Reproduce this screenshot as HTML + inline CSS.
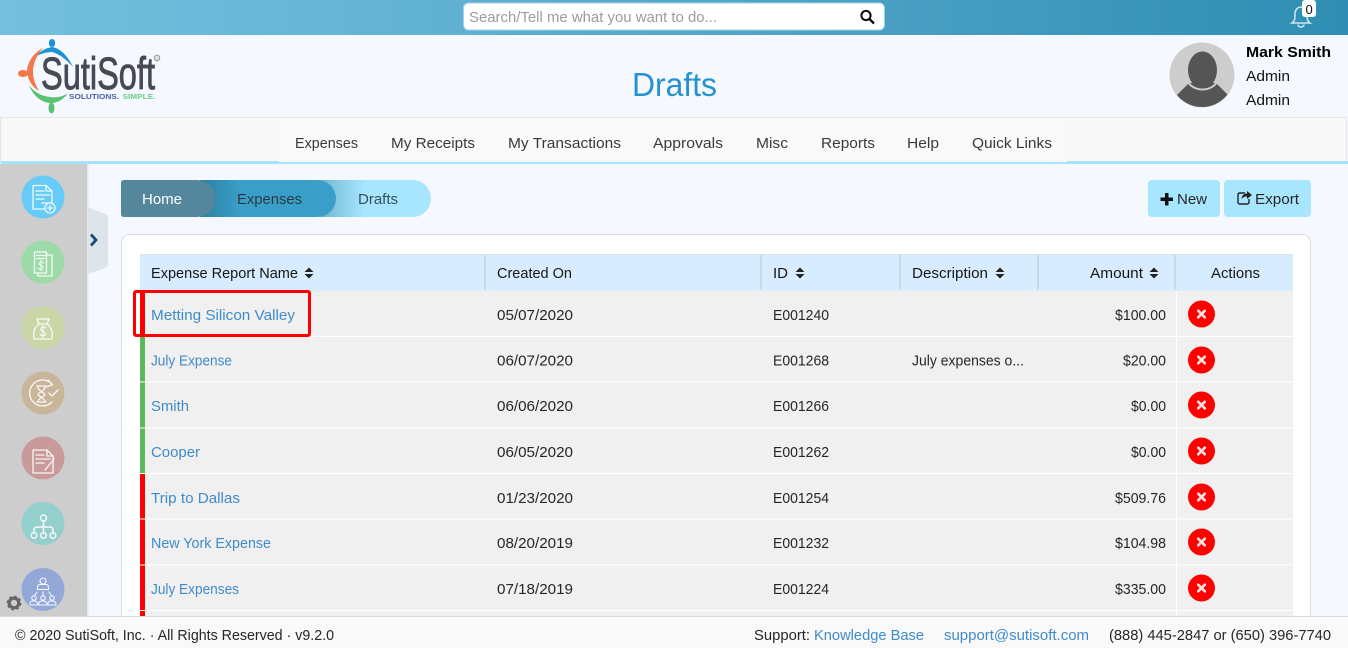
<!DOCTYPE html>
<html lang="en"><head><meta charset="utf-8"><title>Drafts</title>
<style>
html,body{margin:0;padding:0;width:1348px;height:648px;overflow:hidden;background:#f5f9ff}
svg{display:block}
text{font-family:"Liberation Sans",sans-serif;font-size:15px;fill:#262626}
.nav{fill:#3a3a3a}.lnk{fill:#3f8bcb}.hd{fill:#161616}
.i{fill:none;stroke:#fff;stroke-width:1.3;stroke-linejoin:round;stroke-linecap:round;opacity:.9}
</style></head><body>
<svg xmlns="http://www.w3.org/2000/svg" width="1348" height="648" viewBox="0 0 1348 648">
<defs>
<linearGradient id="top" x1="0" x2="1" y1="0" y2="0"><stop offset="0" stop-color="#74c0de"/><stop offset=".25" stop-color="#66b5d6"/><stop offset="1" stop-color="#2f8db3"/></linearGradient>
<linearGradient id="s1" x1="0" x2="1" y1="0" y2="0"><stop offset="0" stop-color="#2a7fa3"/><stop offset="1" stop-color="#3a9fc8"/></linearGradient>
<linearGradient id="s2" x1="0" x2="1" y1="0" y2="0"><stop offset="0" stop-color="#6fb6d3"/><stop offset="1" stop-color="#a8e6ff"/></linearGradient>
<clipPath id="av"><circle cx="1202" cy="75" r="32"/></clipPath>
<symbol id="del" overflow="visible"><circle cx="0" cy="0" r="13.5" fill="#fe0000"/><path d="M-3.3-3.3L3.3 3.3M3.3-3.3L-3.3 3.3" stroke="#fbe4e4" stroke-width="2.6" stroke-linecap="round"/></symbol>
<symbol id="sort" overflow="visible"><path d="M0-5.5L4.5-1H-4.5ZM0 5.5L4.5 1H-4.5Z" fill="#222"/></symbol>
</defs>

<!-- top bar -->
<rect width="1348" height="35" fill="url(#top)"/>
<rect x="463.5" y="3" width="421" height="27" rx="5" fill="#fff" stroke="#a5d3ea"/>
<text x="469" y="22" style="fill:#9c9c9c" textLength="248" lengthAdjust="spacingAndGlyphs">Search/Tell me what you want to do...</text>
<circle cx="866" cy="15.5" r="4.6" fill="none" stroke="#111" stroke-width="2"/><path d="M869.5 19L874 23.5" stroke="#111" stroke-width="2.4"/>
<path d="M1292 23c3-2 3-5 3-9 0-4 2.5-7 6-7s6 3 6 7c0 4 0 7 3 9z" fill="none" stroke="#cfeaf5" stroke-width="1.5"/><path d="M1298 24.500a3 2.500 0 0 0 6 0" fill="none" stroke="#cfeaf5" stroke-width="1.5"/>
<rect x="1302" y="0" width="14" height="17" rx="3" fill="#fff"/>
<text x="1305.5" y="14" style="font-size:13px;fill:#111">0</text>

<!-- logo -->
<g>
<path d="M35 57C40 51 46 48 52 47C60 48 68 56 73 67C66 59 59 54 52 52C46 52 40 54 35 57Z" fill="#1e93d2"/>
<rect x="49" y="39" width="6" height="8" rx="3" fill="#1e93d2"/>
<path d="M43 48C33 53 27 63 27 72C28 80 32 87 39 91C35 84 33 78 33 72C33 63 37 55 43 48Z" fill="#f4784a"/>
<ellipse cx="23" cy="73.500" rx="5" ry="3.500" fill="#f4784a"/>
<path d="M29 85C33 96 42 103 51 103C58 103 64 99 68 93C62 97 56 98 50 97C41 96 34 92 29 85Z" fill="#5cbf72"/>
<ellipse cx="51.500" cy="108" rx="3" ry="5.500" fill="#5cbf72"/>
<text x="41" y="89" style="font-size:45px;fill:#464a55;stroke:#464a55;stroke-width:.9" textLength="114" lengthAdjust="spacingAndGlyphs">SutiSoft</text>
<text x="69" y="99" style="font-size:7.5px;fill:#4d5cab;font-weight:bold" textLength="50" lengthAdjust="spacingAndGlyphs">SOLUTIONS.</text>
<text x="122.5" y="99" style="font-size:7.5px;fill:#6fc98a;font-weight:bold" textLength="33" lengthAdjust="spacingAndGlyphs">SIMPLE.</text>
<circle cx="157" cy="58" r="2.8" fill="#ddd" stroke="#888" stroke-width=".8"/>
</g>

<text x="632" y="96" style="font-size:33px;fill:#2592cf" textLength="85" lengthAdjust="spacingAndGlyphs">Drafts</text>

<!-- avatar -->
<circle cx="1202" cy="75" r="32.5" fill="#cdcdcd"/>
<g clip-path="url(#av)"><path d="M1177 95L1189 83H1216L1228 95L1228 110H1176Z" fill="#555"/><path d="M1188 82C1194 92 1211 92 1217 82" fill="none" stroke="#cdcdcd" stroke-width="2"/>
<ellipse cx="1202.500" cy="70" rx="14.5" ry="18.5" fill="#555"/></g>
<text x="1246" y="57" style="font-weight:bold;fill:#000" textLength="85" lengthAdjust="spacingAndGlyphs">Mark Smith</text>
<text x="1246" y="81" style="fill:#111" textLength="44" lengthAdjust="spacingAndGlyphs">Admin</text>
<text x="1246" y="105" style="fill:#111" textLength="44" lengthAdjust="spacingAndGlyphs">Admin</text>

<!-- nav -->
<rect x="0.5" y="117.5" width="1346" height="45" fill="#f8f8f8" stroke="#e6e6e6"/>
<rect x="1" y="161" width="278" height="3" fill="#a6e3fb"/>
<rect x="279" y="118" width="788" height="44" fill="#f9f9f9"/>
<rect x="279" y="162" width="788" height="2" fill="#a6e3fb"/>
<rect x="1067" y="161" width="281" height="3" fill="#a6e3fb"/>
<text class="nav" x="295" y="148" textLength="63" lengthAdjust="spacingAndGlyphs">Expenses</text>
<text class="nav" x="391" y="148" textLength="84" lengthAdjust="spacingAndGlyphs">My Receipts</text>
<text class="nav" x="508" y="148" textLength="113" lengthAdjust="spacingAndGlyphs">My Transactions</text>
<text class="nav" x="653" y="148" textLength="70" lengthAdjust="spacingAndGlyphs">Approvals</text>
<text class="nav" x="756" y="148" textLength="32" lengthAdjust="spacingAndGlyphs">Misc</text>
<text class="nav" x="821" y="148" textLength="54" lengthAdjust="spacingAndGlyphs">Reports</text>
<text class="nav" x="907" y="148" textLength="32" lengthAdjust="spacingAndGlyphs">Help</text>
<text class="nav" x="972" y="148" textLength="80" lengthAdjust="spacingAndGlyphs">Quick Links</text>

<!-- sidebar -->
<rect x="0" y="164" width="87" height="452" fill="#cdcdcd"/>
<rect x="87" y="164" width="1.5" height="452" fill="#e2e6ee"/>
<path d="M88 207L105 214Q108 215 108 218V264Q108 267 105 268L88 274Z" fill="#dde5ec"/>
<path d="M91 234.5L96 240L91 245.5" fill="none" stroke="#1d4a7a" stroke-width="2.8"/>

<circle cx="43" cy="197" r="21.5" fill="#67cbf8"/>
<g class="i"><path d="M33 185.5H46L52 191V203H42M33 185.5V209H44M46 185.5V191H52M36 191H44M36 195H50M36 199H44"/><circle cx="50" cy="208" r="5" fill="#67cbf8"/><path d="M47.5 208H52.5M50 205.5V210.5"/></g>
<circle cx="43" cy="262" r="21.5" fill="#9cdaa8"/>
<g class="i"><path d="M34.5 252H46.5V273H34.5ZM46.5 255H52V276H38V273M36.5 255.5H45M36.5 258.5H45"/><path d="M44 263C42 261 38 262 39.5 264.5C41 266 44 266 43 268.5C42 270 38.5 269.500 38 268M41 260V271" stroke-width="1"/></g>
<circle cx="43" cy="327.5" r="21.5" fill="#cbd6a6"/>
<g class="i"><path d="M37 319H49L47 324H39ZM39 324C34 328 33 332 34 339H52C53 332 52 328 47 324"/><path d="M46 328C44 326 40 327 41 330C42 332 46 332 45.5 334.5C44.5 336.5 41 336 40 334M43 325.5V337.5" stroke-width="1.1"/></g>
<circle cx="43" cy="393" r="21.5" fill="#c8b59a"/>
<g class="i"><path d="M52 384A13 13 0 1 0 52 402M48 380L52.500 384.500L47 387M37 386H46M37 402H46M38 387C38 391 45 393 45 394.500C45 396 38 398 38 402M45 387C45 391 38 393 38 394.500C38 396 45 398 45 402M49 393L52 396L58 390"/></g>
<circle cx="43" cy="458" r="21.5" fill="#c99a9a"/>
<g class="i"><path d="M33 450H47L53 456V473H33ZM47 450V456H53M36 455H44M36 459H50M36 463H44M45 470L54 459"/></g>
<circle cx="43" cy="523.5" r="21.5" fill="#93cfcd"/>
<g class="i" style="stroke-width:1.5"><circle cx="43.500" cy="518" r="3"/><path d="M43.500 521V533M34 533V530Q34 527 37 527H50Q53 527 53 530V533"/><circle cx="34" cy="535.5" r="2.8"/><circle cx="43.500" cy="535.5" r="2.8"/><circle cx="53" cy="535.5" r="2.8"/></g>
<circle cx="43" cy="589.5" r="21.5" fill="#94a8d8"/>
<g class="i" style="stroke-width:1.1"><circle cx="43" cy="581" r="3"/><path d="M37.500 589.500V587Q37.500 584.500 40 584.500H46Q48.500 584.500 48.500 587V589.500ZM43 592V596M37 592L35 595M49 592L51 595"/><circle cx="34" cy="598" r="2.2"/><circle cx="43" cy="598" r="2.2"/><circle cx="52" cy="598" r="2.2"/><path d="M30 605V603Q30 601 34 601T38 605ZM39 605V603Q39 601 43 601T47 605ZM48 605V603Q48 601 52 601T56 605Z"/></g>
<circle cx="14" cy="603" r="4.8" fill="none" stroke="#666" stroke-width="3.2"/><circle cx="14" cy="603" r="6.5" fill="none" stroke="#666" stroke-width="1.8" stroke-dasharray="2.500 2.600"/>

<!-- breadcrumb -->
<path d="M300 180H412.5A18.5 18.5 0 0 1 412.5 217H300Z" fill="#a8e6ff"/>
<rect x="320" y="180" width="45" height="37" fill="url(#s2)"/>
<path d="M200 180H317.5A18.5 18.5 0 0 1 317.5 217H200Z" fill="#3a9fc8"/>
<rect x="200" y="180" width="40" height="37" fill="url(#s1)"/>
<path d="M124 180H197A18.5 18.5 0 0 1 197 217H124Q121 217 121 214V183Q121 180 124 180Z" fill="#54879b"/>
<text x="142" y="204" style="fill:#fff" textLength="40" lengthAdjust="spacingAndGlyphs">Home</text>
<text x="237" y="204" style="fill:#2b3a42" textLength="65" lengthAdjust="spacingAndGlyphs">Expenses</text>
<text x="358" y="204" style="fill:#33505f" textLength="40" lengthAdjust="spacingAndGlyphs">Drafts</text>

<!-- buttons -->
<rect x="1148" y="180" width="72" height="37" rx="4" fill="#a8e6ff"/>
<path d="M1165 193h3.500v4.500h4.500v3.500h-4.500v4.500h-3.500v-4.500h-4.500v-3.500h4.500z" fill="#111"/>
<text x="1177" y="204" textLength="30" lengthAdjust="spacingAndGlyphs">New</text>
<rect x="1224" y="180" width="87" height="37" rx="4" fill="#a8e6ff"/>
<path d="M1245 193h-5q-2 0-2 2v7q0 2 2 2h7q2 0 2-2v-3" fill="none" stroke="#222" stroke-width="1.4"/>
<path d="M1247 191l5 4-5 4v-2.500c-3 0-4.500 1-5.500 3 0-3.500 2-6 5.500-6z" fill="#222"/>
<text x="1255" y="204" textLength="44" lengthAdjust="spacingAndGlyphs">Export</text>

<!-- card -->
<rect x="121.5" y="234.5" width="1189" height="420" rx="8" fill="#fff" stroke="#dcdcdc"/>

<!-- table header -->
<rect x="140" y="254" width="1153" height="37" fill="#d7edff"/>
<rect x="140" y="254" width="1153" height="1" fill="#dde3e8"/>
<g fill="#bde0e4"><rect x="484" y="255" width="2" height="35"/><rect x="760" y="255" width="2" height="35"/><rect x="899" y="255" width="2" height="35"/><rect x="1037" y="255" width="2" height="35"/><rect x="1174" y="255" width="2" height="35"/></g>
<text class="hd" x="151" y="278" textLength="147" lengthAdjust="spacingAndGlyphs">Expense Report Name</text><use href="#sort" x="309" y="273"/>
<text class="hd" x="497" y="278" textLength="75" lengthAdjust="spacingAndGlyphs">Created On</text>
<text class="hd" x="773" y="278" textLength="15" lengthAdjust="spacingAndGlyphs">ID</text><use href="#sort" x="800" y="273"/>
<text class="hd" x="912" y="278" textLength="76" lengthAdjust="spacingAndGlyphs">Description</text><use href="#sort" x="1000" y="273"/>
<text class="hd" x="1090" y="278" textLength="53" lengthAdjust="spacingAndGlyphs">Amount</text><use href="#sort" x="1154" y="273"/>
<text class="hd" x="1211" y="278" textLength="49" lengthAdjust="spacingAndGlyphs">Actions</text>

<!-- rows -->
<g fill="#f0f0f0">
<rect x="145" y="291" width="1148" height="45"/><rect x="145" y="337" width="1148" height="44.5"/><rect x="145" y="382.5" width="1148" height="45"/><rect x="145" y="428.5" width="1148" height="44.5"/><rect x="145" y="474" width="1148" height="44.5"/><rect x="145" y="519.5" width="1148" height="45"/><rect x="145" y="565.5" width="1148" height="44.5"/><rect x="145" y="611" width="1148" height="5"/>
</g>
<rect x="1176" y="291" width="1" height="325" fill="#fff"/>
<g fill="#5cb85c"><rect x="140" y="337" width="5" height="44.5"/><rect x="140" y="382.5" width="5" height="45"/><rect x="140" y="428.5" width="5" height="44.5"/></g>
<g fill="#fe0000"><rect x="140" y="291" width="5" height="45"/><rect x="140" y="474" width="5" height="44.5"/><rect x="140" y="519.5" width="5" height="45"/><rect x="140" y="565.5" width="5" height="44.5"/><rect x="140" y="611" width="5" height="5"/></g>
<rect x="134.5" y="291.5" width="175" height="44" rx="1.5" fill="none" stroke="#fe0000" stroke-width="3"/>

<text class="lnk" x="151" y="320" textLength="144" lengthAdjust="spacingAndGlyphs">Metting Silicon Valley</text>
<text x="497" y="320" textLength="76" lengthAdjust="spacingAndGlyphs">05/07/2020</text><text x="773" y="320" textLength="56" lengthAdjust="spacingAndGlyphs">E001240</text><text x="1115" y="320" textLength="51" lengthAdjust="spacingAndGlyphs">$100.00</text><use href="#del" x="1201.5" y="314"/>

<text class="lnk" x="151" y="365.5" textLength="81" lengthAdjust="spacingAndGlyphs">July Expense</text>
<text x="497" y="365.5" textLength="76" lengthAdjust="spacingAndGlyphs">06/07/2020</text><text x="773" y="365.5" textLength="56" lengthAdjust="spacingAndGlyphs">E001268</text><text x="912" y="365.5" textLength="112" lengthAdjust="spacingAndGlyphs">July expenses o...</text><text x="1123" y="365.5" textLength="43" lengthAdjust="spacingAndGlyphs">$20.00</text><use href="#del" x="1201.5" y="360"/>

<text class="lnk" x="151" y="411" textLength="38" lengthAdjust="spacingAndGlyphs">Smith</text>
<text x="497" y="411" textLength="76" lengthAdjust="spacingAndGlyphs">06/06/2020</text><text x="773" y="411" textLength="56" lengthAdjust="spacingAndGlyphs">E001266</text><text x="1131" y="411" textLength="35" lengthAdjust="spacingAndGlyphs">$0.00</text><use href="#del" x="1201.5" y="405"/>

<text class="lnk" x="151" y="457" textLength="49" lengthAdjust="spacingAndGlyphs">Cooper</text>
<text x="497" y="457" textLength="76" lengthAdjust="spacingAndGlyphs">06/05/2020</text><text x="773" y="457" textLength="56" lengthAdjust="spacingAndGlyphs">E001262</text><text x="1131" y="457" textLength="35" lengthAdjust="spacingAndGlyphs">$0.00</text><use href="#del" x="1201.5" y="451"/>

<text class="lnk" x="151" y="503" textLength="89" lengthAdjust="spacingAndGlyphs">Trip to Dallas</text>
<text x="497" y="503" textLength="76" lengthAdjust="spacingAndGlyphs">01/23/2020</text><text x="773" y="503" textLength="56" lengthAdjust="spacingAndGlyphs">E001254</text><text x="1115" y="503" textLength="51" lengthAdjust="spacingAndGlyphs">$509.76</text><use href="#del" x="1201.5" y="497"/>

<text class="lnk" x="151" y="548" textLength="120" lengthAdjust="spacingAndGlyphs">New York Expense</text>
<text x="497" y="548" textLength="76" lengthAdjust="spacingAndGlyphs">08/20/2019</text><text x="773" y="548" textLength="56" lengthAdjust="spacingAndGlyphs">E001232</text><text x="1115" y="548" textLength="51" lengthAdjust="spacingAndGlyphs">$104.98</text><use href="#del" x="1201.5" y="542"/>

<text class="lnk" x="151" y="594" textLength="88" lengthAdjust="spacingAndGlyphs">July Expenses</text>
<text x="497" y="594" textLength="76" lengthAdjust="spacingAndGlyphs">07/18/2019</text><text x="773" y="594" textLength="56" lengthAdjust="spacingAndGlyphs">E001224</text><text x="1115" y="594" textLength="51" lengthAdjust="spacingAndGlyphs">$335.00</text><use href="#del" x="1201.5" y="588"/>

<!-- footer -->
<rect x="0" y="616" width="1348" height="32" fill="#f9f9f9"/>
<rect x="0" y="616" width="1348" height="1" fill="#dddddd"/>
<text x="15" y="640" textLength="319" lengthAdjust="spacingAndGlyphs">© 2020 SutiSoft, Inc. · All Rights Reserved · v9.2.0</text>
<text x="754" y="640" textLength="56" lengthAdjust="spacingAndGlyphs">Support:</text>
<text class="lnk" x="814" y="640" textLength="110" lengthAdjust="spacingAndGlyphs">Knowledge Base</text>
<text class="lnk" x="944" y="640" textLength="145" lengthAdjust="spacingAndGlyphs">support@sutisoft.com</text>
<text x="1109" y="640" textLength="222" lengthAdjust="spacingAndGlyphs">(888) 445-2847 or (650) 396-7740</text>
</svg>
</body></html>
